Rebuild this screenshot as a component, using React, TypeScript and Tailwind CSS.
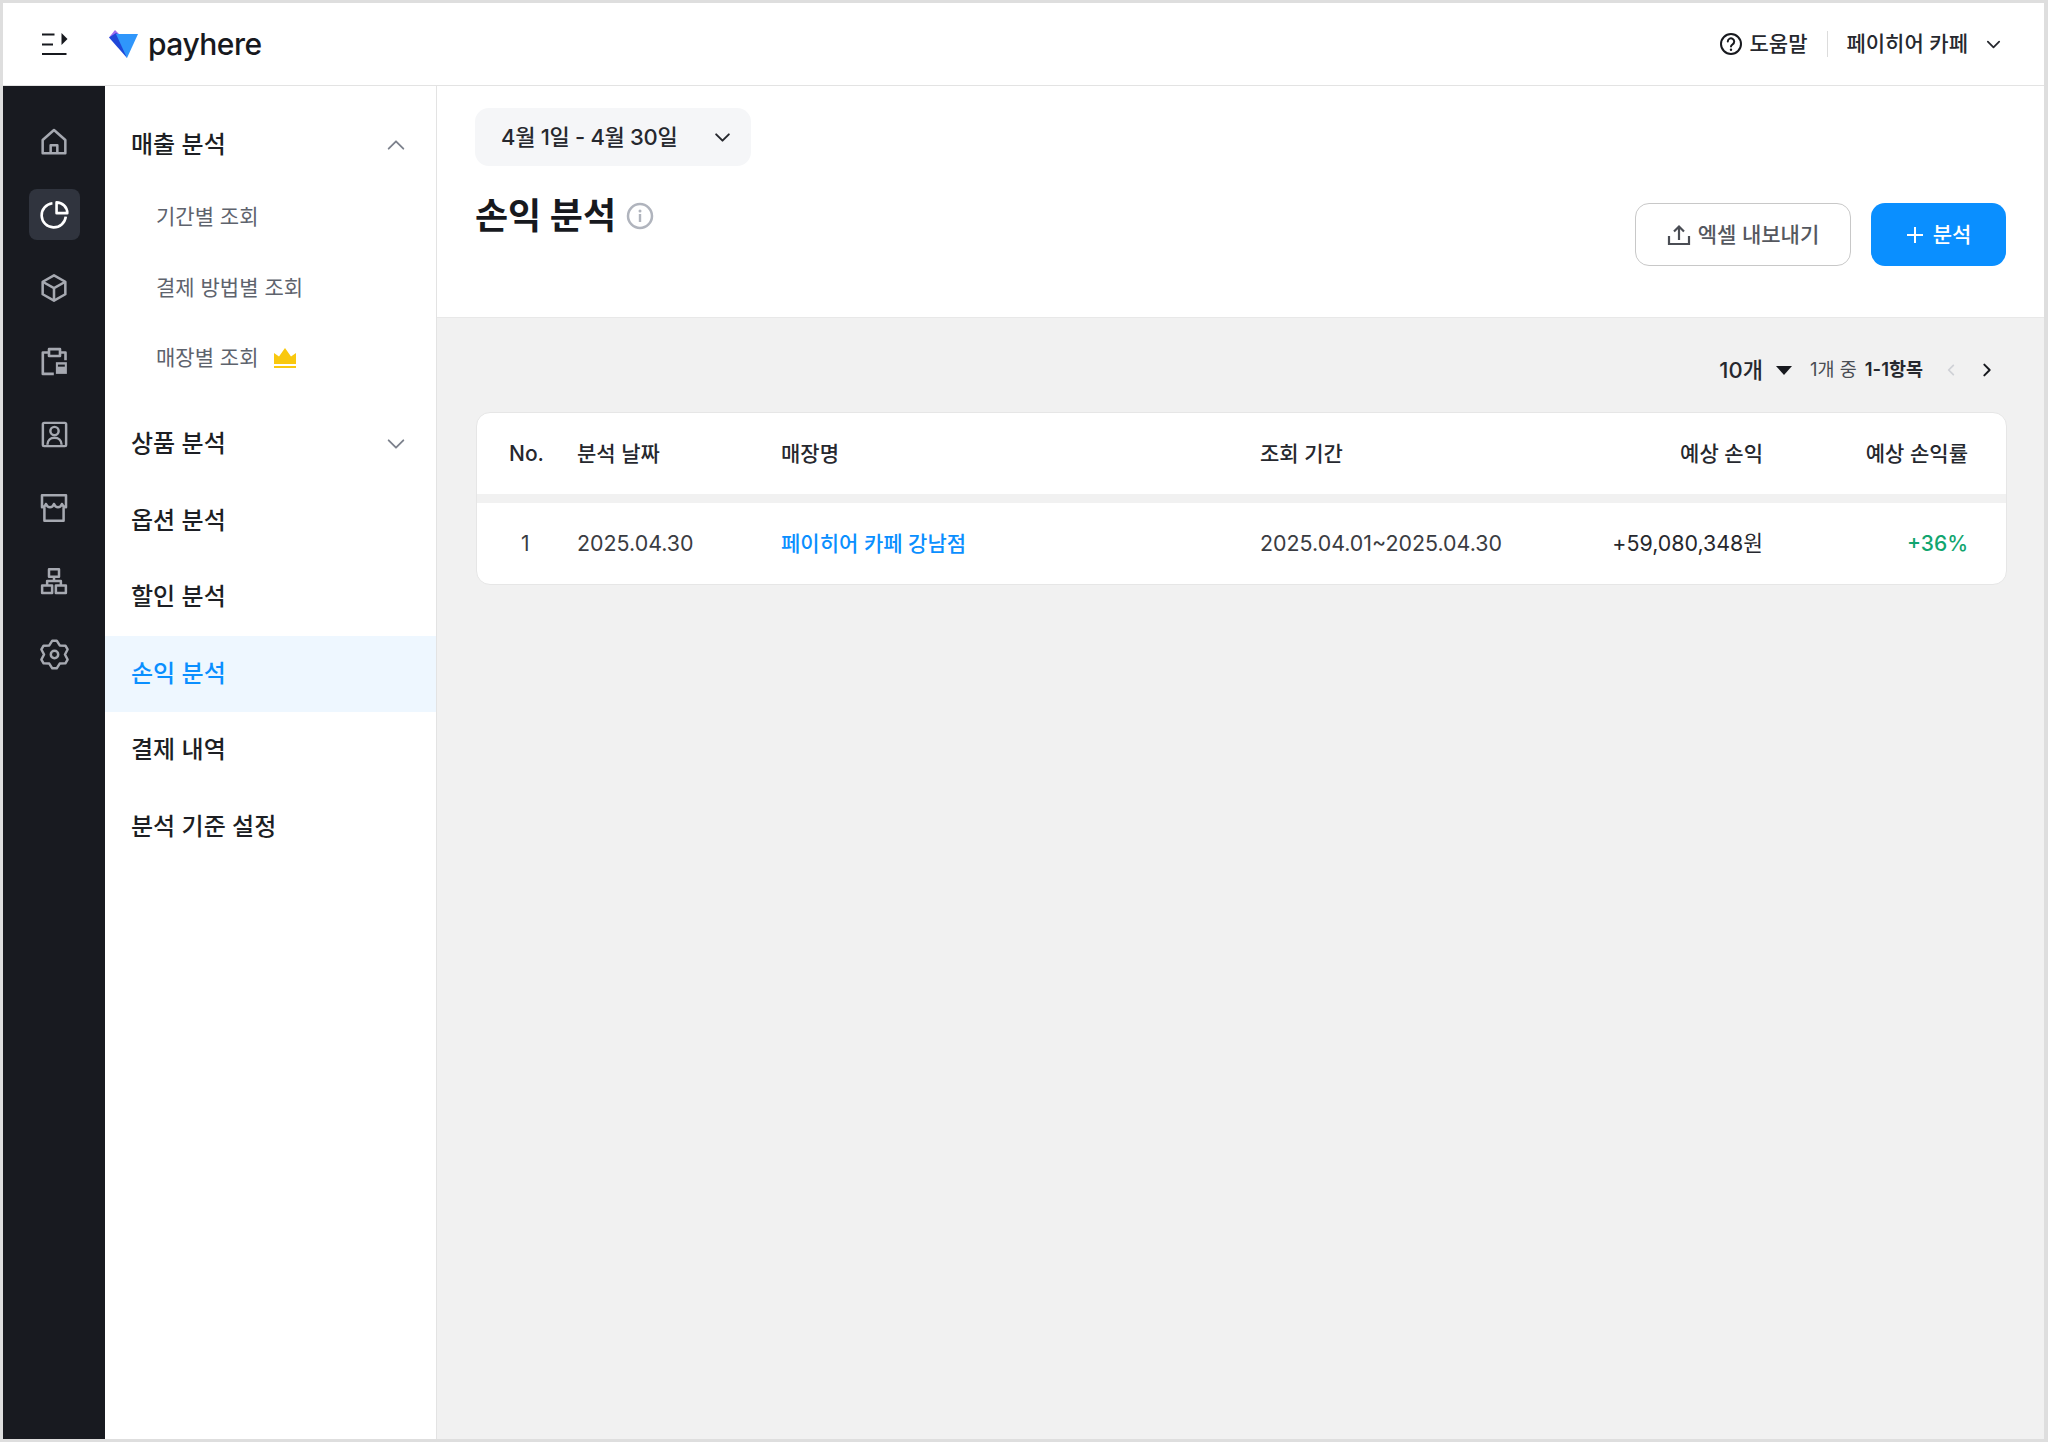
import React from "react";

const FONT = "[font-family:Inter,'Noto_Sans_CJK_KR',sans-serif]";

const Stroke = ({ children, size = 30, className = "", w = 2 }: { children: React.ReactNode; size?: number; className?: string; w?: number }) => (
  <svg width={size} height={size} viewBox="0 0 24 24" fill="none" stroke="currentColor" strokeWidth={w} strokeLinejoin="round" className={className}>
    {children}
  </svg>
);

const gearPoints = [0, 1, 2, 3, 4, 5]
  .flatMap((k) => {
    const c = -90 + k * 60;
    return [
      [c - 9, 10.2],
      [c + 9, 10.2],
      [c + 30, 7.6],
    ];
  })
  .map(([deg, r]) => `${(12 + r * Math.cos((deg * Math.PI) / 180)).toFixed(2)},${(12 + r * Math.sin((deg * Math.PI) / 180)).toFixed(2)}`)
  .join(" ");

const railIcons: React.ReactNode[] = [
  <Stroke key="home" size={32} w={1.900}><path d="M3.500 10.500 12 3l8.500 7.500V20.500h-17z" /><path d="M9.500 20.500V14.500h5v6" /></Stroke>,
  <Stroke key="pie" size={33} w={1.900}><path d="M10.500 3.800a8.800 8.800 0 1 0 9.700 9.700" /><path d="M13.500 3.200v7.800h7.800a7.800 7.800 0 0 0-7.800-7.800z" /></Stroke>,
  <Stroke key="box" size={32} w={1.900}><path d="M12 2.500 20.500 7.300v9.400L12 21.500l-8.500-4.800V7.300z" /><path d="M3.500 7.300l8.500 4.800 8.500-4.800M12 12.100v9.400" /></Stroke>,
  <Stroke key="clip" size={33} w={1.900}><path d="M8 5.500H3.500V21h8" /><path d="M16 5.500h4v5.500" /><path d="M8 3h8v5H8z" /><rect x="13" y="12.500" width="8" height="8.500" fill="currentColor" stroke="none" /><path d="M14.500 15h5" stroke="#181a20" strokeWidth="1.500" /></Stroke>,
  <Stroke key="user" size={31} w={1.900}><rect x="3" y="3" width="18" height="18" rx="1" /><circle cx="12" cy="9.300" r="3.200" /><path d="M6.500 20c0-3.500 2.500-5.500 5.500-5.500s5.500 2 5.500 5.500" /></Stroke>,
  <Stroke key="store" size={32} w={1.900}><path d="M3 11.500V2.500h18v9Q19 11.500 18 9 17 11.500 15 11.500 13 11.500 12 9 11 11.500 9 11.500 7 11.500 6 9 5 11.500 3 11.500z" /><path d="M4.800 11.500V21.500h14.400V11.500" /></Stroke>,
  <Stroke key="org" size={30} w={2}><rect x="8" y="2.500" width="8" height="6" /><rect x="2.500" y="15.500" width="8" height="6" /><rect x="13.500" y="15.500" width="8" height="6" /><path d="M12 8.500V12M6.500 15.500V12h11v3.500" /></Stroke>,
  <Stroke key="gear" size={33} w={1.800}><polygon points={gearPoints} /><circle cx="12" cy="12" r="2.700" /></Stroke>,
];

const Chevron = ({ up = false, size = 24, className = "", w = 2 }: { up?: boolean; size?: number; className?: string; w?: number }) => (
  <svg width={size} height={size} viewBox="0 0 24 24" fill="none" stroke="currentColor" strokeWidth={w} strokeLinecap="round" strokeLinejoin="round" className={className}>
    <path d={up ? "M4 16l8-8 8 8" : "M4 8l8 8 8-8"} />
  </svg>
);

const Crown = () => (
  <svg width="24" height="22" viewBox="0 0 24 22" className="ml-[14px]">
    <path d="M1 6l5 3.500L12 1l6 8.500L23 6v11H1z" fill="#f9c80e" />
    <rect x="1" y="19" width="22" height="2" fill="#f9c80e" />
  </svg>
);

const Logo = () => (
  <svg width="30" height="30" viewBox="0 0 30 30">
    <path d="M0 8.500 6 1l8 8z" fill="#9b6cf0" />
    <path d="M0 8.500 7 4l8 5 3 20z" fill="#1f47d8" />
    <path d="M7 5h22L18 29z" fill="#2f96fb" />
  </svg>
);

const NavItem = ({ label, active = false, chevron }: { label: string; active?: boolean; chevron?: "up" | "down" }) => (
  <div className={`flex h-[76.500px] items-center justify-between pl-[26px] pr-[29px] text-[24px] font-medium ${active ? "bg-[#eef7ff] text-[#0a8fff]" : "text-[#1d1f24]"}`}>
    <span>{label}</span>
    {chevron && <Chevron up={chevron === "up"} size={22} className="text-[#7c818c]" />}
  </div>
);

const SubItem = ({ label, crown = false }: { label: string; crown?: boolean }) => (
  <div className="flex h-[70.500px] items-center pl-[51px] text-[21px] text-[#5e636d]">
    <span>{label}</span>
    {crown && <Crown />}
  </div>
);

const COLS = "grid-cols-[100px_204px_479px_250px_253px_205px]";

export default function App() {
  return (
    <div className={`${FONT} flex h-[1442px] w-[2048px] flex-col overflow-hidden bg-[#dedede] pb-[3px] pl-[3px] pr-[4px] pt-[3px]`}>
      <header className="flex h-[83px] shrink-0 items-center justify-between border-b border-[#e3e3e3] bg-white pr-[42px]">
        <div className="flex items-center">
          <svg width="26" height="22" viewBox="0 0 26 22" className="ml-[39px]">
            <path d="M0 1.500h12.500M0 11.500h11M0 21h24.500" stroke="#17191e" strokeWidth="2" fill="none" />
            <path d="M19.500 0l6 6-6 6z" fill="#17191e" />
          </svg>
          <div className="ml-[41px] flex items-center">
            <Logo />
            <span className="ml-[9px] text-[30px] font-medium leading-none tracking-[-0.5px] text-[#17191e]">payhere</span>
          </div>
        </div>
        <div className="flex items-center text-[21px] font-medium text-[#26282e]">
          <svg width="24" height="24" viewBox="0 0 24 24" fill="none" stroke="#17191e" strokeWidth="2">
            <circle cx="12" cy="12" r="10" />
            <path d="M8.800 9.500a3.200 3.200 0 1 1 4.800 2.800c-1 .6-1.600 1.100-1.600 2.200" strokeLinecap="round" />
            <circle cx="12" cy="17.800" r="1.200" fill="#17191e" stroke="none" />
          </svg>
          <span className="ml-[7px]">도움말</span>
          <div className="ml-[20px] h-[26px] w-px bg-[#dcdcdc]" />
          <span className="ml-[18px]">페이히어 카페</span>
          <Chevron size={17} className="ml-[17px] text-[#26282e]" w={2.500} />
        </div>
      </header>

      <div className="flex min-h-0 flex-1">
        <aside className="flex w-[102px] shrink-0 flex-col items-center gap-[22.300px] bg-[#181a20] pt-[30px] text-[#a6a9b1]">
          {railIcons.map((icon, i) => (
            <div key={i} className={`flex h-[51px] w-[51px] items-center justify-center rounded-[8px] ${i === 1 ? "bg-[#30343e] text-white" : ""}`}>
              {icon}
            </div>
          ))}
        </aside>

        <nav className="w-[332px] shrink-0 border-r border-[#e3e3e3] bg-white pt-[21px]">
          <NavItem label="매출 분석" chevron="up" />
          <div className="-mt-[2px] pb-[13px]">
            <SubItem label="기간별 조회" />
            <SubItem label="결제 방법별 조회" />
            <SubItem label="매장별 조회" crown />
          </div>
          <NavItem label="상품 분석" chevron="down" />
          <NavItem label="옵션 분석" />
          <NavItem label="할인 분석" />
          <NavItem label="손익 분석" active />
          <NavItem label="결제 내역" />
          <NavItem label="분석 기준 설정" />
        </nav>

        <main className="flex min-w-0 flex-1 flex-col bg-[#f1f1f1]">
          <section className="h-[232px] shrink-0 border-b border-[#e8e8e8] bg-white pl-[38px] pr-[38px] pt-[22px]">
            <div className="flex h-[58px] w-[276px] items-center justify-between rounded-[14px] bg-[#f5f6f8] pl-[26px] pr-[19px] text-[22px] font-medium tracking-[-0.3px] text-[#26282e]">
              <span>4월 1일 - 4월 30일</span>
              <Chevron size={19} w={2.500} />
            </div>
            <div className="flex items-start justify-between">
              <div className="mt-[27px] flex items-center">
                <h1 className="text-[36px] font-bold leading-[46px] text-[#17191e]">손익 분석</h1>
                <svg width="28" height="28" viewBox="0 0 28 28" fill="none" className="ml-[10px]">
                  <circle cx="14" cy="14" r="12" stroke="#b0b4bd" strokeWidth="2.500" />
                  <rect x="12.800" y="12" width="2.400" height="8" fill="#b0b4bd" />
                  <circle cx="14" cy="9" r="1.500" fill="#b0b4bd" />
                </svg>
              </div>
              <div className="mt-[37px] flex gap-[20px]">
                <button className="flex h-[63px] w-[216px] items-center justify-center rounded-[14px] border border-[#c8c8c8] bg-white text-[21px] font-medium text-[#55585f]">
                  <svg width="24" height="24" viewBox="0 0 24 24" fill="none" stroke="#4a4d54" strokeWidth="2.200" className="mr-[7px]">
                    <path d="M2 13v8h20v-8M12 17V4M7 8.500 12 3.500l5 5" />
                  </svg>
                  엑셀 내보내기
                </button>
                <button className="flex h-[63px] w-[135px] items-center justify-center rounded-[14px] bg-[#0a8fff] text-[21px] font-medium text-white">
                  <svg width="18" height="18" viewBox="0 0 18 18" stroke="white" strokeWidth="2" className="mr-[9px]">
                    <path d="M9 1v16M1 9h16" />
                  </svg>
                  분석
                </button>
              </div>
            </div>
          </section>

          <section className="pl-[39px] pr-[37px]">
            <div className="flex h-[94px] items-center justify-end pr-[12px] pt-[10px]">
              <span className="text-[22px] font-medium text-[#26282e]">10개</span>
              <svg width="16" height="9" viewBox="0 0 16 9" className="ml-[13px]">
                <path d="M0 0h16L8 9z" fill="#17191e" />
              </svg>
              <span className="ml-[18px] text-[18.500px] text-[#4a4d54]">1개 중</span>
              <span className="ml-[8px] text-[18.500px] font-semibold text-[#26282e]">1-1항목</span>
              <Chevron size={14} className="ml-[21px] rotate-90 text-[#cfd1d6]" w={3} />
              <Chevron size={16} className="ml-[21px] -rotate-90 text-[#17191e]" w={3} />
            </div>

            <div className="overflow-hidden rounded-[14px] border border-[#e6e6e6] bg-white text-[21px]">
              <div className={`grid h-[90px] ${COLS} items-center border-b-[9px] border-[#f1f1f1] font-medium text-[#26282e]`}>
                <div className="pl-[32px]">No.</div>
                <div>분석 날짜</div>
                <div>매장명</div>
                <div>조회 기간</div>
                <div className="text-right">예상 손익</div>
                <div className="text-right">예상 손익률</div>
              </div>
              <div className={`grid h-[81px] ${COLS} items-center text-[#3a3c42]`}>
                <div className="pl-[44px]">1</div>
                <div className="text-[21.400px]">2025.04.30</div>
                <div className="font-medium text-[#0a8fff]">페이히어 카페 강남점</div>
                <div className="whitespace-nowrap text-[21.400px]">2025.04.01~2025.04.30</div>
                <div className="text-right text-[21.400px] text-[#26282e]">+59,080,348원</div>
                <div className="text-right font-medium text-[#12a56f]">+36%</div>
              </div>
            </div>
          </section>
        </main>
      </div>
    </div>
  );
}
